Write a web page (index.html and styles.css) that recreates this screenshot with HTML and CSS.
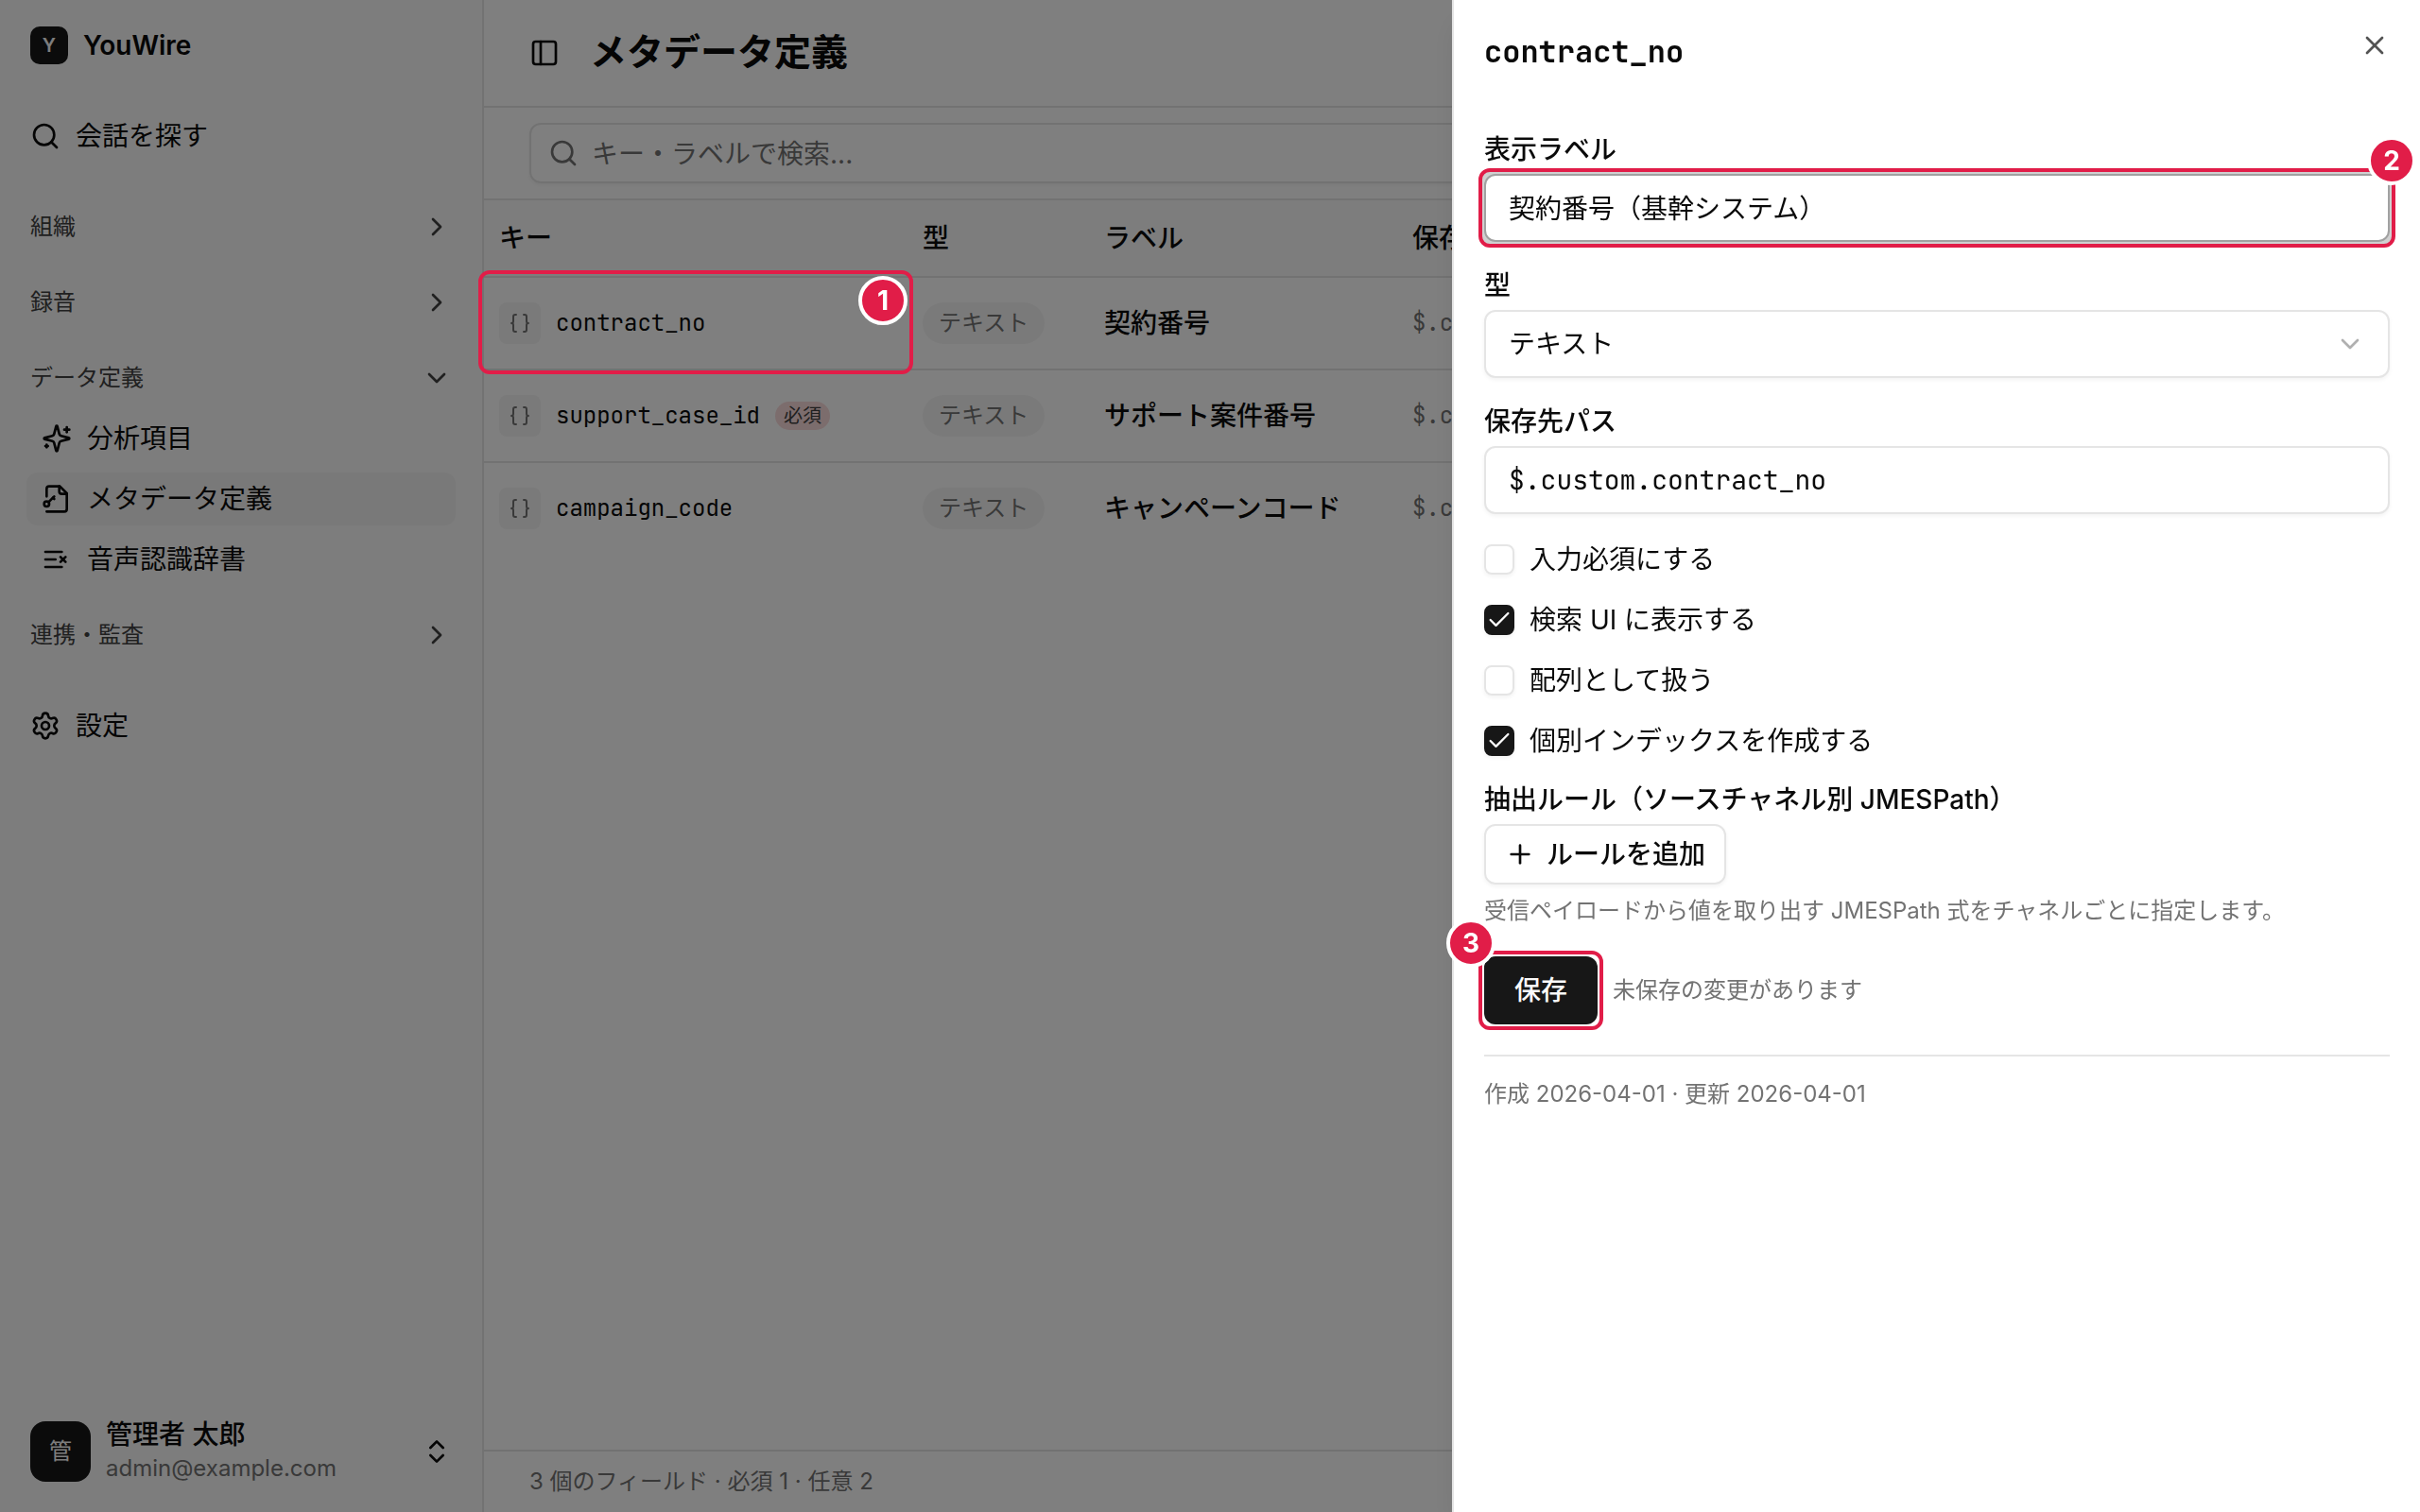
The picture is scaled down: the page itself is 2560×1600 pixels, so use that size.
FILE: index.html
```html
<!DOCTYPE html>
<html lang="ja">
<head>
<meta charset="utf-8">
<meta name="viewport" content="width=device-width, initial-scale=1">
<title>メタデータ定義 - YouWire</title>
<link rel="stylesheet" href="styles.css">
</head>
<body>
<div class="app">
  <aside class="sidebar">
    <div class="brand"><span class="brand-mark">Y</span><span class="brand-name">YouWire</span></div>
    <nav class="nav">
      <a class="nav-item" href="#search"><svg class="icon" viewBox="0 0 24 24"><path d="m21 21-4.34-4.34"/><circle cx="11" cy="11" r="8"/></svg>会話を探す</a>
      <div class="nav-groups">
        <button class="nav-group" type="button">組織<svg class="icon" viewBox="0 0 24 24"><path d="m9 18 6-6-6-6"/></svg></button>
        <button class="nav-group" type="button">録音<svg class="icon" viewBox="0 0 24 24"><path d="m9 18 6-6-6-6"/></svg></button>
        <button class="nav-group" type="button">データ定義<svg class="icon" viewBox="0 0 24 24"><path d="m6 9 6 6 6-6"/></svg></button>
      </div>
      <div class="nav-sub">
        <a class="nav-subitem" href="#analysis"><svg class="icon" viewBox="0 0 24 24"><path d="M9.937 15.5A2 2 0 0 0 8.5 14.063l-6.135-1.582a.5.5 0 0 1 0-.962L8.5 9.936A2 2 0 0 0 9.937 8.5l1.582-6.135a.5.5 0 0 1 .963 0L14.063 8.5A2 2 0 0 0 15.5 9.937l6.135 1.581a.5.5 0 0 1 0 .964L15.5 14.063a2 2 0 0 0-1.437 1.437l-1.582 6.135a.5.5 0 0 1-.963 0z"/><path d="M20 3v4"/><path d="M22 5h-4"/><path d="M4 17v2"/><path d="M5 18H3"/></svg>分析項目</a>
        <a class="nav-subitem active" href="#metadata" aria-current="page"><svg class="icon" viewBox="0 0 24 24"><path d="M14 2v4a2 2 0 0 0 2 2h4"/><path d="M4 10V4a2 2 0 0 1 2-2h8.5L20 7.5V20a2 2 0 0 1-2 2H4"/><circle cx="4" cy="16" r="2"/><path d="m10 10-4.5 4.5"/><path d="m9 11 1 1"/></svg>メタデータ定義</a>
        <a class="nav-subitem" href="#dictionary"><svg class="icon" viewBox="0 0 24 24"><path d="M11 12H3"/><path d="M16 6H3"/><path d="M16 18H3"/><path d="m19 10-4 4"/><path d="m15 10 4 4"/></svg>音声認識辞書</a>
      </div>
      <button class="nav-group" type="button">連携・監査<svg class="icon" viewBox="0 0 24 24"><path d="m9 18 6-6-6-6"/></svg></button>
      <a class="nav-item settings" href="#settings"><svg class="icon" viewBox="0 0 24 24"><path d="M9.671 4.136a2.34 2.34 0 0 1 4.659 0 2.34 2.34 0 0 0 3.319 1.915 2.34 2.34 0 0 1 2.33 4.033 2.34 2.34 0 0 0 0 3.831 2.34 2.34 0 0 1-2.33 4.033 2.34 2.34 0 0 0-3.319 1.915 2.34 2.34 0 0 1-4.659 0 2.34 2.34 0 0 0-3.32-1.915 2.34 2.34 0 0 1-2.33-4.033 2.34 2.34 0 0 0 0-3.831A2.34 2.34 0 0 1 6.35 6.051a2.34 2.34 0 0 0 3.319-1.915"/><circle cx="12" cy="12" r="3"/></svg>設定</a>
    </nav>
    <button class="user" type="button">
      <span class="avatar">管</span>
      <span class="user-text"><span class="user-name">管理者 太郎</span><span class="user-mail">admin@example.com</span></span>
      <svg class="icon" viewBox="0 0 24 24"><path d="m7 15 5 5 5-5"/><path d="m7 9 5-5 5 5"/></svg>
    </button>
  </aside>

  <main class="main">
    <header class="page-head">
      <button class="icon-button" type="button" aria-label="サイドバーを切り替え"><svg class="icon" viewBox="0 0 24 24"><rect width="18" height="18" x="3" y="3" rx="2"/><path d="M9 3v18"/></svg></button>
      <h1 class="page-title">メタデータ定義</h1>
    </header>
    <div class="toolbar">
      <label class="search"><svg class="icon" viewBox="0 0 24 24"><path d="m21 21-4.34-4.34"/><circle cx="11" cy="11" r="8"/></svg><input class="search-input" type="search" placeholder="キー・ラベルで検索..." aria-label="キー・ラベルで検索"></label>
    </div>
    <table class="fields">
      <colgroup><col class="col-key"><col class="col-type"><col class="col-label"><col></colgroup>
      <thead>
        <tr><th scope="col">キー</th><th scope="col">型</th><th scope="col">ラベル</th><th scope="col">保存先パス</th></tr>
      </thead>
      <tbody>
        <tr>
          <td class="marked-cell"><div class="key"><span class="key-icon"><svg viewBox="0 0 24 24"><path d="M8 3H7a2 2 0 0 0-2 2v5a2 2 0 0 1-2 2 2 2 0 0 1 2 2v5c0 1.100.9 2 2 2h1"/><path d="M16 21h1a2 2 0 0 0 2-2v-5c0-1.100.9-2 2-2a2 2 0 0 1-2-2V5a2 2 0 0 0-2-2h-1"/></svg></span>contract_no</div><span class="mark mark-row"><span class="mark-no">1</span></span></td>
          <td><span class="type">テキスト</span></td><td class="label">契約番号</td><td class="path">$.custom.contract_no</td>
        </tr>
        <tr>
          <td><div class="key"><span class="key-icon"><svg viewBox="0 0 24 24"><path d="M8 3H7a2 2 0 0 0-2 2v5a2 2 0 0 1-2 2 2 2 0 0 1 2 2v5c0 1.100.9 2 2 2h1"/><path d="M16 21h1a2 2 0 0 0 2-2v-5c0-1.100.9-2 2-2a2 2 0 0 1-2-2V5a2 2 0 0 0-2-2h-1"/></svg></span>support_case_id<span class="required">必須</span></div></td>
          <td><span class="type">テキスト</span></td><td class="label">サポート案件番号</td><td class="path">$.custom.support_case_id</td>
        </tr>
        <tr>
          <td><div class="key"><span class="key-icon"><svg viewBox="0 0 24 24"><path d="M8 3H7a2 2 0 0 0-2 2v5a2 2 0 0 1-2 2 2 2 0 0 1 2 2v5c0 1.100.9 2 2 2h1"/><path d="M16 21h1a2 2 0 0 0 2-2v-5c0-1.100.9-2 2-2a2 2 0 0 1-2-2V5a2 2 0 0 0-2-2h-1"/></svg></span>campaign_code</div></td>
          <td><span class="type">テキスト</span></td><td class="label">キャンペーンコード</td><td class="path">$.custom.campaign_code</td>
        </tr>
      </tbody>
    </table>
    <footer class="page-foot">3 個のフィールド · 必須 1 · 任意 2</footer>
  </main>
</div>

<div class="overlay"></div>

<section class="sheet" role="dialog" aria-labelledby="sheet-title">
  <header class="sheet-head">
    <h2 class="sheet-title" id="sheet-title">contract_no</h2>
    <button class="icon-button close" type="button" aria-label="閉じる"><svg class="icon" viewBox="0 0 24 24"><path d="M18 6 6 18"/><path d="m6 6 12 12"/></svg></button>
  </header>
  <form class="form">
    <div class="field">
      <label for="f-label">表示ラベル</label>
      <div class="control"><input class="input focused" id="f-label" type="text" value="契約番号（基幹システム）"><span class="mark mark-input"><span class="mark-no">2</span></span></div>
    </div>
    <div class="field">
      <label for="f-type">型</label>
      <div class="control"><select class="input" id="f-type"><option>テキスト</option></select><svg class="icon select-arrow" viewBox="0 0 24 24"><path d="m6 9 6 6 6-6"/></svg></div>
    </div>
    <div class="field">
      <label for="f-path">保存先パス</label>
      <input class="input mono" id="f-path" type="text" value="$.custom.contract_no">
    </div>
    <div class="checks">
      <label class="check"><input type="checkbox">入力必須にする</label>
      <label class="check"><input type="checkbox" checked>検索 UI に表示する</label>
      <label class="check"><input type="checkbox">配列として扱う</label>
      <label class="check"><input type="checkbox" checked>個別インデックスを作成する</label>
    </div>
    <div class="field">
      <span>抽出ルール（ソースチャネル別 JMESPath）</span>
      <button class="add-rule" type="button"><svg class="icon" viewBox="0 0 24 24"><path d="M5 12h14"/><path d="M12 5v14"/></svg>ルールを追加</button>
      <p class="hint">受信ペイロードから値を取り出す JMESPath 式をチャネルごとに指定します。</p>
    </div>
    <div class="actions">
      <div class="control"><button class="save" type="submit">保存</button><span class="mark mark-save"><span class="mark-no">3</span></span></div>
      <span class="hint">未保存の変更があります</span>
    </div>
    <p class="meta">作成 2026-04-01 · 更新 2026-04-01</p>
  </form>
</section>
</body>
</html>
```
FILE: styles.css
```css
:root {
  --text: #0a0a0a;
  --muted: #737373;
  --line: #e5e5e5;
  --soft: #f5f5f5;
  --dark: #171717;
  --mark: #e11d48;
  --sans: Inter, "Noto Sans CJK JP", sans-serif;
  --mono: "JetBrains Mono", "DejaVu Sans Mono", "Noto Sans CJK JP", monospace;
}

* { box-sizing: border-box; }

body {
  margin: 0;
  background: #fff;
  color: var(--text);
  font-family: var(--sans);
  font-size: 28px;
  line-height: 40px;
}

h1, h2, p { margin: 0; }

button, input, select {
  font: inherit;
  color: inherit;
}

button {
  border: 0;
  padding: 0;
  background: none;
  text-align: left;
}

a {
  color: inherit;
  text-decoration: none;
}

.icon {
  flex: none;
  width: 32px;
  height: 32px;
}

svg {
  fill: none;
  stroke: currentColor;
  stroke-width: 2;
  stroke-linecap: round;
  stroke-linejoin: round;
}

.app {
  display: flex;
  min-height: 100vh;
}

/* Sidebar */
.sidebar {
  display: flex;
  flex: none;
  flex-direction: column;
  width: 512px;
  padding: 28px;
  border-right: 2px solid var(--line);
  background: #fafafa;
}

.brand {
  display: flex;
  align-items: center;
  gap: 16px;
  padding-left: 4px;
}

.brand-mark {
  width: 40px;
  height: 40px;
  border-radius: 10px;
  background: var(--dark);
  color: #fafafa;
  font-size: 20px;
  font-weight: 600;
  text-align: center;
}

.brand-name { font-weight: 600; }

.nav {
  display: flex;
  flex: 1;
  flex-direction: column;
  padding-top: 48px;
}

.nav-item {
  display: flex;
  align-items: center;
  gap: 16px;
  height: 56px;
  padding-left: 4px;
}

.nav-groups {
  display: grid;
  gap: 16px;
  margin-top: 36px;
}

.nav-group {
  display: flex;
  align-items: center;
  justify-content: space-between;
  height: 64px;
  padding: 0 4px;
  color: #404040;
  font-size: 24px;
}

.nav-sub {
  display: grid;
  gap: 8px;
  margin: 4px 0 20px;
}

.nav-subitem {
  display: flex;
  align-items: center;
  gap: 16px;
  height: 56px;
  padding-left: 16px;
  border-radius: 12px;
}

.nav-subitem.active { background: #f2f2f2; }

.settings { margin-top: 36px; }

.user {
  display: flex;
  align-items: center;
  gap: 16px;
  padding: 0 4px;
}

.avatar {
  width: 64px;
  height: 64px;
  border-radius: 16px;
  background: var(--dark);
  color: #fafafa;
  font-size: 24px;
  line-height: 64px;
  text-align: center;
}

.user-text {
  display: grid;
  flex: 1;
}

.user-name {
  font-weight: 500;
  line-height: 36px;
}

.user-mail {
  color: var(--muted);
  font-size: 24px;
  line-height: 36px;
}

/* Page */
.main {
  display: flex;
  flex: 1;
  flex-direction: column;
  min-width: 0;
}

.page-head {
  display: flex;
  align-items: center;
  gap: 32px;
  height: 114px;
  padding: 0 48px;
  border-bottom: 2px solid var(--line);
}

.icon-button { display: flex; }

.page-title {
  padding-bottom: 2px;
  font-size: 39px;
  font-weight: 600;
}

.toolbar {
  padding: 16px 48px;
  border-bottom: 2px solid var(--line);
}

.search {
  display: flex;
  align-items: center;
  gap: 14px;
  height: 64px;
  padding: 0 18px;
  border: 2px solid var(--line);
  border-radius: 12px;
  box-shadow: 0 2px 4px rgb(0 0 0 / 5%);
  color: var(--muted);
}

.search-input {
  flex: 1;
  min-width: 0;
  border: 0;
  padding: 2px 0 0;
  background: none;
  outline: 0;
}

.search-input::placeholder { color: var(--muted); }

.fields {
  width: 100%;
  border-spacing: 0;
  table-layout: fixed;
}

.col-key { width: 448px; }
.col-type { width: 192px; }
.col-label { width: 326px; }

.fields th {
  height: 82px;
  padding: 0 16px;
  border-bottom: 2px solid var(--line);
  background: #fafafa;
  font-weight: 500;
  text-align: left;
}

.fields td {
  height: 98px;
  padding: 0 16px;
  border-bottom: 2px solid var(--line);
}

.fields tr:last-child td {
  height: 96px;
  border-bottom: 0;
}

.marked-cell { position: relative; }

.key {
  display: flex;
  align-items: center;
  gap: 16px;
  font-family: var(--mono);
  font-size: 24px;
}

.key-icon {
  display: grid;
  place-items: center;
  width: 44px;
  height: 44px;
  border-radius: 8px;
  background: var(--soft);
  color: var(--muted);
}

.key-icon svg {
  width: 24px;
  height: 24px;
}

.required {
  padding: 0 9px;
  border-radius: 15px;
  background: #f9dada;
  color: #404040;
  font-family: var(--sans);
  font-size: 20px;
  line-height: 30px;
}

.type {
  display: inline-block;
  padding: 0 17px;
  border-radius: 22px;
  background: var(--soft);
  color: var(--muted);
  font-size: 24px;
  line-height: 44px;
  vertical-align: middle;
}

.fields .label { font-weight: 500; }

.fields .path {
  color: var(--muted);
  font-family: var(--mono);
  font-size: 24px;
}

.page-foot {
  margin-top: auto;
  padding: 12px 48px;
  border-top: 2px solid var(--line);
  color: var(--muted);
  font-size: 24px;
}

/* Side sheet */
.overlay {
  position: fixed;
  inset: 0;
  z-index: 10;
  background: rgb(0 0 0 / 50%);
}

.sheet {
  position: fixed;
  inset: 0 0 0 auto;
  z-index: 20;
  width: 40%;
  padding: 32px;
  border-left: 2px solid var(--line);
  background: #fff;
  box-shadow: 0 20px 30px -6px rgb(0 0 0 / 10%), 0 8px 12px -8px rgb(0 0 0 / 10%);
}

.sheet-head {
  display: flex;
  align-items: start;
  justify-content: space-between;
}

.sheet-title {
  padding-bottom: 2px;
  font-family: var(--mono);
  font-size: 32px;
  font-weight: 600;
  line-height: 46px;
}

.close { color: #535353; }

.form {
  display: grid;
  gap: 24px;
  padding-top: 56px;
}

.field {
  display: grid;
  gap: 4px;
  font-weight: 500;
  line-height: 44px;
}

.control { position: relative; }

.input {
  display: block;
  width: 100%;
  height: 72px;
  padding: 0 24px;
  border: 2px solid var(--line);
  border-radius: 12px;
  background: #fff;
  box-shadow: 0 2px 4px rgb(0 0 0 / 5%);
  appearance: none;
  outline: 0;
  font-weight: 400;
}

input.input { padding-bottom: 2px; }

.input.mono { font-family: var(--mono); }

.input.focused {
  border-color: #a1a1a1;
  box-shadow: 0 0 0 6px #d0d0d0;
}

.select-arrow {
  position: absolute;
  top: 20px;
  right: 26px;
  color: #b0b0b0;
  pointer-events: none;
}

.checks {
  display: grid;
  gap: 32px;
  padding-top: 8px;
}

.check {
  display: flex;
  align-items: center;
  gap: 16px;
  line-height: 32px;
}

.check input {
  width: 32px;
  height: 32px;
  margin: 0;
  border: 2px solid var(--line);
  border-radius: 8px;
  box-shadow: 0 2px 4px rgb(0 0 0 / 5%);
  appearance: none;
}

.check input:checked {
  border-color: var(--dark);
  background: var(--dark) url("data:image/svg+xml,%3Csvg xmlns='http://www.w3.org/2000/svg' viewBox='0 0 24 24' fill='none' stroke='%23fafafa' stroke-width='2' stroke-linecap='round' stroke-linejoin='round'%3E%3Cpath d='M20 6 9 17l-5-5'/%3E%3C/svg%3E") center / 28px no-repeat;
}

.add-rule {
  display: flex;
  align-items: center;
  justify-self: start;
  gap: 12px;
  height: 64px;
  margin-top: 4px;
  padding: 0 20px;
  border: 2px solid var(--line);
  border-radius: 12px;
  box-shadow: 0 2px 4px rgb(0 0 0 / 5%);
}

.field .add-rule { margin-top: 0; }

.hint {
  color: var(--muted);
  font-size: 24px;
  font-weight: 400;
  line-height: 48px;
}

.actions {
  display: flex;
  align-items: center;
  gap: 16px;
  padding-bottom: 8px;
}

.save {
  display: block;
  height: 72px;
  padding: 0 32px;
  border-radius: 12px;
  background: var(--dark);
  color: #fafafa;
  font-weight: 500;
}

.meta {
  padding-top: 20px;
  border-top: 2px solid var(--line);
  color: var(--muted);
  font-size: 24px;
}

/* Numbered callouts */
.mark {
  position: absolute;
  inset: -6px;
  z-index: 30;
  border: 4px solid var(--mark);
  border-radius: 12px;
  pointer-events: none;
}

.mark-row { inset: -8px -6px -6px; }

.mark-no {
  position: absolute;
  width: 52px;
  height: 52px;
  border: 4px solid #fff;
  border-radius: 50%;
  background: var(--mark);
  color: #fff;
  font-family: var(--sans);
  font-size: 28px;
  font-weight: 700;
  line-height: 44px;
  text-align: center;
}

.mark-row .mark-no { top: 2px; right: 2px; }
.mark-input .mark-no { top: -38px; right: -26px; }
.mark-save .mark-no { top: -38px; left: -38px; }
```
